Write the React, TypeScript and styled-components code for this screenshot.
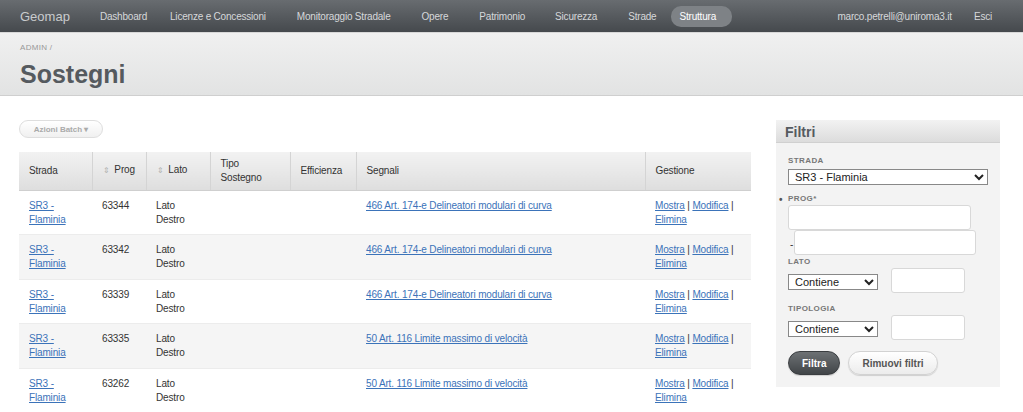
import React from "react";
import styled, { createGlobalStyle } from "styled-components";

const GlobalStyle = createGlobalStyle`
  html, body {
    margin: 0;
    padding: 0;
    background: #ffffff;
    font-family: "Liberation Sans", Arial, sans-serif;
    color: #333;
  }
  * { box-sizing: border-box; }
`;

const Page = styled.div`
  width: 1023px;
  height: 412px;
  overflow: hidden;
`;

const NavBar = styled.div`
  height: 33px;
  background: linear-gradient(#686c70, #45494d);
  border-bottom: 1px solid #d8d8d8;
  display: flex;
  align-items: center;
  padding: 0 0 0 20px;
  white-space: nowrap;
`;

const Brand = styled.span`
  font-size: 13px;
  color: #c9cbcd;
  margin-right: 30px;
`;

const NavItem = styled.span<{ $active?: boolean; $gap?: number }>`
  font-size: 10px;
  letter-spacing: -0.2px;
  color: ${(p) => (p.$active ? "#ffffff" : "#d6d8da")};
  margin-right: ${(p) => p.$gap ?? 30}px;
  ${(p) =>
    p.$active &&
    `background: #7e8286; border-radius: 10px; padding: 5px 16px 5px 8px;`}
`;

const NavRight = styled.div`
  margin-left: auto;
  display: flex;
  align-items: center;
  padding-right: 31px;
`;

const Header = styled.div`
  height: 63px;
  background: linear-gradient(#f0f0f0, #e2e3e3);
  border-bottom: 1px solid #cfcfcf;
  padding: 10px 20px 0;
`;

const Crumb = styled.div`
  font-size: 8px;
  color: #999;
  letter-spacing: 0.3px;
`;

const Title = styled.h1`
  margin: 8px 0 0;
  font-size: 25px;
  font-weight: bold;
  color: #555a5f;
`;

const Body = styled.div`
  display: flex;
  padding: 24px 0 0 19px;
  gap: 25px;
`;

const Main = styled.div`
  width: 732px;
`;

const BatchButton = styled.button`
  display: block;
  height: 18px;
  width: 84px;
  border: 1px solid #dedede;
  border-radius: 9px;
  background: linear-gradient(#ffffff, #f0f0f0);
  font-family: inherit;
  font-size: 8px;
  font-weight: bold;
  color: #aaa;
  padding: 0;
  margin-bottom: 14px;
`;

const Table = styled.table`
  width: 732px;
  border-collapse: collapse;
  font-size: 10px;
  letter-spacing: -0.15px;
  table-layout: fixed;
`;

const Th = styled.th<{ $w: number }>`
  width: ${(p) => p.$w}px;
  height: 38px;
  text-align: left;
  font-weight: normal;
  color: #333;
  padding: 0 10px;
  background: linear-gradient(#f2f2f2, #dedede);
  border-left: 1px solid #d4d4d4;
  border-bottom: 1px solid #cfcfcf;
  line-height: 14px;
  &:first-child {
    border-left: none;
  }
`;

const Sort = styled.span`
  color: #b0b0b0;
  font-size: 8px;
  margin-right: 5px;
`;

const Row = styled.tr<{ $alt: boolean }>`
  background: ${(p) => (p.$alt ? "#f5f5f5" : "#ffffff")};
  border-bottom: 1px solid #ececec;
`;

const Td = styled.td`
  vertical-align: top;
  padding: 8px 10px 0;
  height: 44.5px;
  line-height: 14px;
  color: #333;
`;

const Link = styled.a`
  color: #3b73b9;
  text-decoration: underline;
`;

const Actions = styled.div`
  white-space: nowrap;
`;

const Sep = styled.span`
  color: #333;
`;

const Panel = styled.div`
  width: 224px;
  height: 267px;
  background: #f3f3f3;
`;

const PanelHead = styled.div`
  height: 23px;
  background: linear-gradient(#f2f2f2, #dcdcdc);
  border-bottom: 1px solid #d0d0d0;
  font-size: 14px;
  font-weight: bold;
  color: #555a5f;
  padding: 4px 0 0 9px;
`;

const PanelBody = styled.div`
  padding: 13px 12px 0;
  position: relative;
`;

const Label = styled.div<{ $top?: number }>`
  font-size: 8px;
  font-weight: bold;
  color: #777;
  letter-spacing: 0.4px;
  margin-top: ${(p) => p.$top ?? 0}px;
  margin-bottom: 2px;
`;

const Bullet = styled.span`
  position: absolute;
  left: 3px;
  font-size: 10px;
  color: #555;
`;

const Select = styled.select<{ $w: number }>`
  width: ${(p) => p.$w}px;
  height: 16px;
  font-family: inherit;
  font-size: 11px;
  border: 1px solid #888;
  border-radius: 0;
  background: #fff;
  color: #222;
  padding: 0 2px;
`;

const TextBox = styled.input<{ $w: number; $ml?: number }>`
  width: ${(p) => p.$w}px;
  height: 25px;
  border: 1px solid #d8d8d8;
  border-radius: 3px;
  background: #fff;
  margin-left: ${(p) => p.$ml ?? 0}px;
`;

const Line = styled.div`
  display: flex;
  align-items: center;
`;

const FilterRow = styled.div`
  display: flex;
  align-items: flex-end;
  & > select {
    margin-bottom: 3px;
  }
`;

const Dash = styled.span`
  font-size: 10px;
  color: #333;
  margin: 4px 1px 0 2px;
`;

const Buttons = styled.div`
  display: flex;
  gap: 8px;
  margin-top: 11px;
`;

const Btn = styled.button<{ $dark?: boolean }>`
  height: 24px;
  border-radius: 12px;
  font-family: inherit;
  font-size: 10px;
  font-weight: bold;
  padding: 0 13px;
  border: 1px solid ${(p) => (p.$dark ? "#3a3d40" : "#d2d2d2")};
  background: ${(p) =>
    p.$dark ? "linear-gradient(#6d7174, #414548)" : "linear-gradient(#ffffff, #ececec)"};
  color: ${(p) => (p.$dark ? "#ffffff" : "#555")};
  box-shadow: 0 1px 1px rgba(0, 0, 0, 0.15);
`;

const rows = [
  { prog: "63344", seg: "466 Art. 174-e Delineatori modulari di curva" },
  { prog: "63342", seg: "466 Art. 174-e Delineatori modulari di curva" },
  { prog: "63339", seg: "466 Art. 174-e Delineatori modulari di curva" },
  { prog: "63335", seg: "50 Art. 116 Limite massimo di velocità" },
  { prog: "63262", seg: "50 Art. 116 Limite massimo di velocità" },
];

const App = () => (
  <Page>
    <GlobalStyle />
    <NavBar>
      <Brand>Geomap</Brand>
      <NavItem $gap={23}>Dashboard</NavItem>
      <NavItem $gap={31}>Licenze e Concessioni</NavItem>
      <NavItem $gap={31}>Monitoraggio Stradale</NavItem>
      <NavItem $gap={31}>Opere</NavItem>
      <NavItem $gap={30}>Patrimonio</NavItem>
      <NavItem $gap={31}>Sicurezza</NavItem>
      <NavItem $gap={15}>Strade</NavItem>
      <NavItem $active>Struttura</NavItem>
      <NavRight>
        <NavItem $gap={22}>marco.petrelli@uniroma3.it</NavItem>
        <NavItem $gap={0}>Esci</NavItem>
      </NavRight>
    </NavBar>
    <Header>
      <Crumb>ADMIN /</Crumb>
      <Title>Sostegni</Title>
    </Header>
    <Body>
      <Main>
        <BatchButton>Azioni Batch ▾</BatchButton>
        <Table>
          <thead>
            <tr>
              <Th $w={73}>Strada</Th>
              <Th $w={54}>
                <Sort>⇕</Sort>Prog
              </Th>
              <Th $w={64}>
                <Sort>⇕</Sort>Lato
              </Th>
              <Th $w={80}>
                Tipo
                <br />
                Sostegno
              </Th>
              <Th $w={66}>Efficienza</Th>
              <Th $w={289}>Segnali</Th>
              <Th $w={106}>Gestione</Th>
            </tr>
          </thead>
          <tbody>
            {rows.map((r, i) => (
              <Row key={r.prog} $alt={i % 2 === 1}>
                <Td>
                  <Link>SR3 -</Link>
                  <br />
                  <Link>Flaminia</Link>
                </Td>
                <Td>{r.prog}</Td>
                <Td>
                  Lato
                  <br />
                  Destro
                </Td>
                <Td />
                <Td />
                <Td>
                  <Link>{r.seg}</Link>
                </Td>
                <Td>
                  <Actions>
                    <Link>Mostra</Link> <Sep>|</Sep> <Link>Modifica</Link> <Sep>|</Sep>
                  </Actions>
                  <Link>Elimina</Link>
                </Td>
              </Row>
            ))}
          </tbody>
        </Table>
      </Main>
      <Panel>
        <PanelHead>Filtri</PanelHead>
        <PanelBody>
          <Label>STRADA</Label>
          <Select $w={200}>
            <option>SR3 - Flaminia</option>
          </Select>
          <Label $top={9}>
            <Bullet>•</Bullet>PROG*
          </Label>
          <TextBox $w={183} />
          <Line>
            <Dash>-</Dash>
            <TextBox $w={182} />
          </Line>
          <Label $top={2}>LATO</Label>
          <FilterRow>
            <Select $w={90}>
              <option>Contiene</option>
            </Select>
            <TextBox $w={74} $ml={13} />
          </FilterRow>
          <Label $top={11}>TIPOLOGIA</Label>
          <FilterRow>
            <Select $w={90}>
              <option>Contiene</option>
            </Select>
            <TextBox $w={74} $ml={13} />
          </FilterRow>
          <Buttons>
            <Btn $dark>Filtra</Btn>
            <Btn>Rimuovi filtri</Btn>
          </Buttons>
        </PanelBody>
      </Panel>
    </Body>
  </Page>
);

export default App;
